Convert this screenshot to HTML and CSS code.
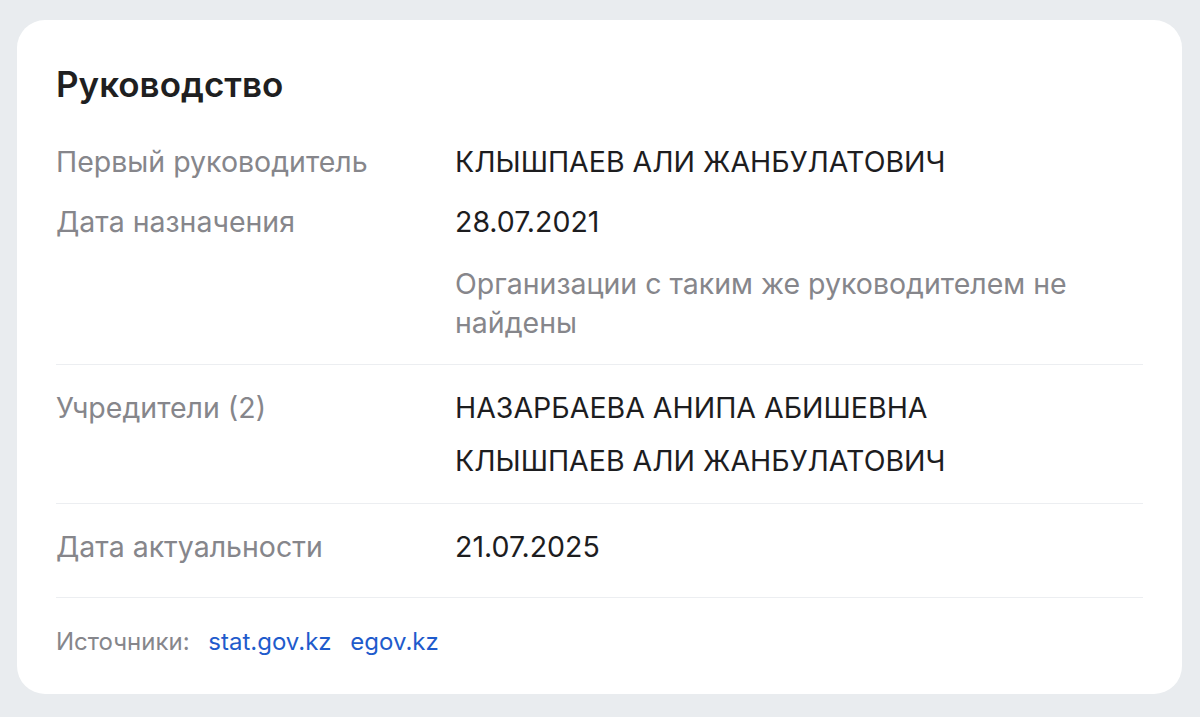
FILE: index.html
```html
<!DOCTYPE html>
<html lang="ru">
<head>
    <meta charset="UTF-8">
    <meta name="viewport" content="width=device-width, initial-scale=1.0">
    <title>Руководство</title>
    <link rel="stylesheet" href="styles.css">
</head>
<body>
    <div class="card">
        <h2 class="card-title">Руководство</h2>

        <div class="section section-first">
            <div class="row">
                <div class="label">Первый руководитель</div>
                <div class="value">КЛЫШПАЕВ АЛИ ЖАНБУЛАТОВИЧ</div>
            </div>
            <div class="row">
                <div class="label">Дата назначения</div>
                <div class="value">28.07.2021</div>
            </div>
            <div class="row row-note">
                <div class="label"></div>
                <div class="value note">Организации с таким же руководителем не найдены</div>
            </div>
        </div>

        <div class="section">
            <div class="row">
                <div class="label">Учредители (2)</div>
                <div class="value list">
                    <span>НАЗАРБАЕВА АНИПА АБИШЕВНА</span>
                    <span>КЛЫШПАЕВ АЛИ ЖАНБУЛАТОВИЧ</span>
                </div>
            </div>
        </div>

        <div class="section section-last">
            <div class="row">
                <div class="label">Дата актуальности</div>
                <div class="value">21.07.2025</div>
            </div>
        </div>

        <div class="sources">
            <span class="sources-label">Источники:</span>
            <a href="#">stat.gov.kz</a>
            <a href="#">egov.kz</a>
        </div>
    </div>
</body>
</html>
```

FILE: styles.css
```css
body {
    margin: 0;
    padding: 20px 18px 24px 17px;
    background-color: #e9ecef;
    font-family: Inter, 'Liberation Sans', Arial, sans-serif;
    color: #1d1d1f;
}

.card {
    background: #ffffff;
    border-radius: 28px;
    padding: 46px 39px 38px;
}

.card-title {
    margin: 0 0 40px;
    font-size: 35px;
    line-height: 36px;
    font-weight: 600;
    color: #1f1f21;
}

.section {
    padding: 23px 0;
    border-top: 1px solid #eceef1;
}

.section-first {
    border-top: none;
    padding: 0 0 22px;
}

.section-last {
    padding-bottom: 31px;
}

.row {
    display: grid;
    grid-template-columns: 399px 1fr;
    font-size: 28.5px;
    line-height: 39px;
}

.row + .row {
    margin-top: 21px;
}

.row-note {
    margin-top: 23px !important;
}

.label {
    color: #86868b;
}

.value {
    color: #1d1d1f;
}

.note {
    color: #86868b;
    max-width: 640px;
}

.list {
    display: flex;
    flex-direction: column;
    gap: 14px;
}

.sources {
    border-top: 1px solid #eceef1;
    padding-top: 30px;
    font-size: 24px;
    line-height: 28px;
}

.sources-label {
    color: #86868b;
    margin-right: 12px;
}

.sources a {
    color: #1f5bcc;
    text-decoration: none;
    margin-right: 12px;
}
```
